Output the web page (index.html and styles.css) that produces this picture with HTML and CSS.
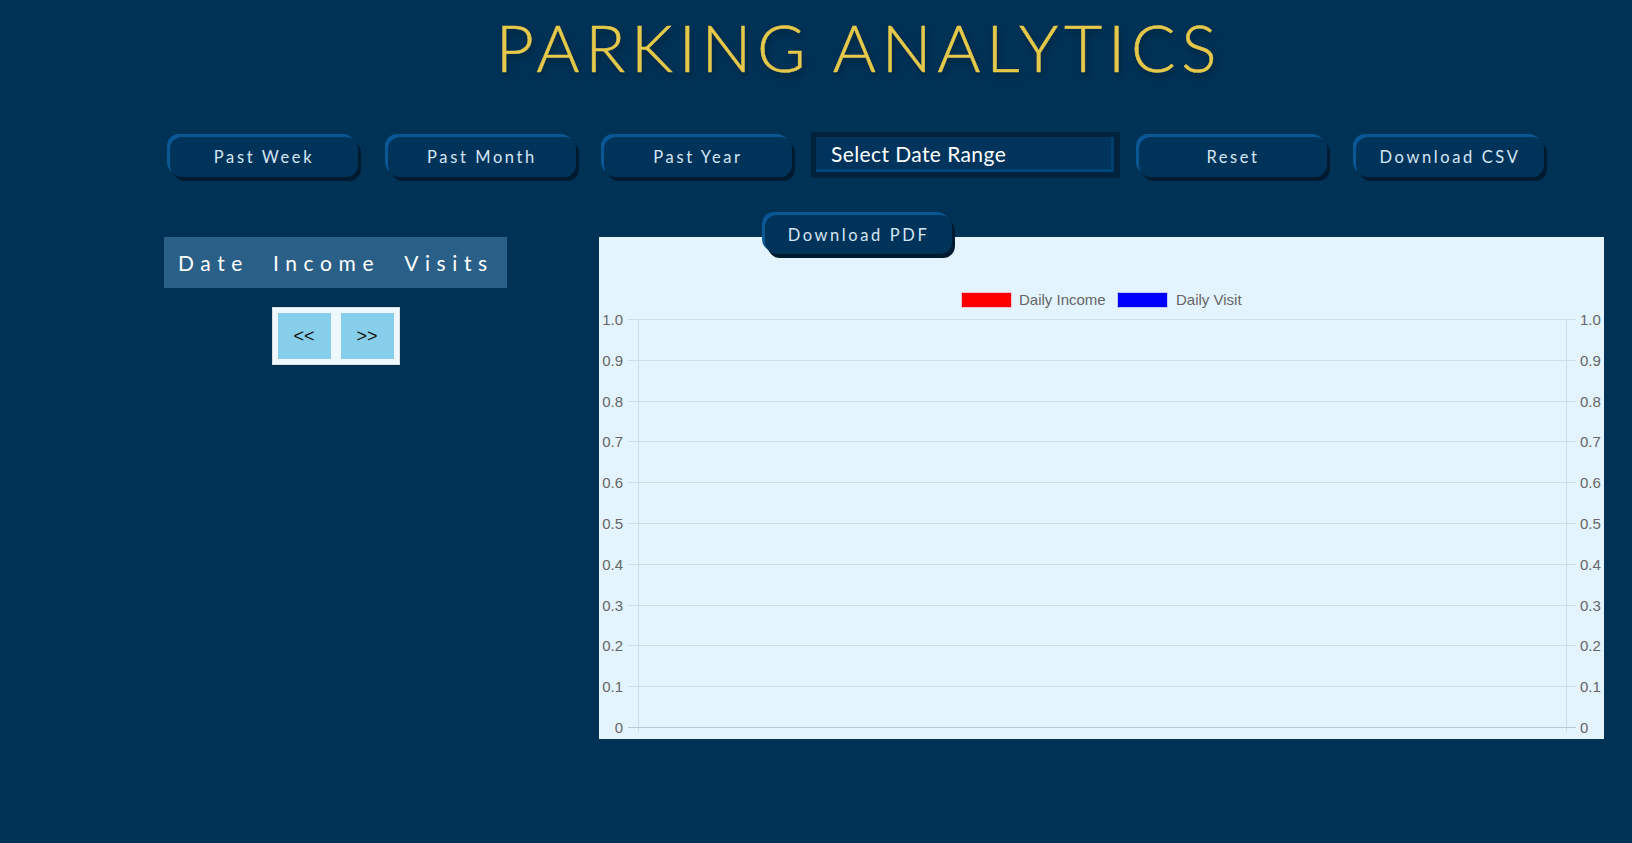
FILE: index.html
```html
<!DOCTYPE html>
<html lang="en">
<head>
<meta charset="utf-8">
<title>Parking Analytics</title>
<link rel="stylesheet" href="styles.css">
</head>
<body>
<div class="page">
  <h1 class="title">PARKING ANALYTICS</h1>
  <div class="toolbar">
    <button class="btn">Past Week</button>
    <button class="btn gap30">Past Month</button>
    <button class="btn gap28">Past Year</button>
    <div class="range"><span class="range-field">Select Date Range</span></div>
    <button class="btn gap19">Reset</button>
    <button class="btn gap29">Download CSV</button>
  </div>
  <div class="main">
    <div class="left">
      <div class="thead"><span>Date</span><span>Income</span><span>Visits</span></div>
      <div class="pager">
        <button class="pg">&lt;&lt;</button>
        <button class="pg">&gt;&gt;</button>
      </div>
    </div>
    <div class="right">
      <button class="btn pdf">Download PDF</button>
      <div class="chart">
        <svg width="1005" height="502" viewBox="0 0 1005 502" xmlns="http://www.w3.org/2000/svg">
          <g font-family="Liberation Sans, Arial, sans-serif" font-size="15" fill="#666">
            <rect x="362.5" y="55.5" width="50" height="15" fill="#ff0000" stroke="#f4c4d0" stroke-width="1"/>
            <text x="420" y="68">Daily Income</text>
            <rect x="518.5" y="55.5" width="50" height="15" fill="#0000ff" stroke="#c4c8f4" stroke-width="1"/>
            <text x="577" y="68">Daily Visit</text>
          </g>
          <g stroke="#cfdde6" stroke-width="1">
            <line x1="29" y1="82.5" x2="977" y2="82.5"/>
            <line x1="29" y1="123.5" x2="977" y2="123.5"/>
            <line x1="29" y1="164.5" x2="977" y2="164.5"/>
            <line x1="29" y1="204.5" x2="977" y2="204.5"/>
            <line x1="29" y1="245.5" x2="977" y2="245.5"/>
            <line x1="29" y1="286.5" x2="977" y2="286.5"/>
            <line x1="29" y1="327.5" x2="977" y2="327.5"/>
            <line x1="29" y1="368.5" x2="977" y2="368.5"/>
            <line x1="29" y1="408.5" x2="977" y2="408.5"/>
            <line x1="29" y1="449.5" x2="977" y2="449.5"/>
            <line x1="39.5" y1="82" x2="39.5" y2="495"/>
            <line x1="967.5" y1="82" x2="967.5" y2="495"/>
          </g>
          <line x1="29" y1="490.5" x2="977" y2="490.5" stroke="#b9c8d2" stroke-width="1"/>
          <g font-family="Liberation Sans, Arial, sans-serif" font-size="15" fill="#666" text-anchor="end">
            <text x="24" y="88">1.0</text>
            <text x="24" y="129">0.9</text>
            <text x="24" y="170">0.8</text>
            <text x="24" y="210">0.7</text>
            <text x="24" y="251">0.6</text>
            <text x="24" y="292">0.5</text>
            <text x="24" y="333">0.4</text>
            <text x="24" y="374">0.3</text>
            <text x="24" y="414">0.2</text>
            <text x="24" y="455">0.1</text>
            <text x="24" y="496">0</text>
          </g>
          <g font-family="Liberation Sans, Arial, sans-serif" font-size="15" fill="#666">
            <text x="981" y="88">1.0</text>
            <text x="981" y="129">0.9</text>
            <text x="981" y="170">0.8</text>
            <text x="981" y="210">0.7</text>
            <text x="981" y="251">0.6</text>
            <text x="981" y="292">0.5</text>
            <text x="981" y="333">0.4</text>
            <text x="981" y="374">0.3</text>
            <text x="981" y="414">0.2</text>
            <text x="981" y="455">0.1</text>
            <text x="981" y="496">0</text>
          </g>
        </svg>
      </div>
    </div>
  </div>
</div>
</body>
</html>
```

FILE: styles.css
```css
html, body {
  margin: 0;
  padding: 0;
  background: #003256;
  height: 100%;
}
body {
  font-family: "Lato", "Open Sans", sans-serif;
  color: #fff;
  overflow: hidden;
}
.page {
  width: 1632px;
}
.title {
  margin: 5px 0 0 86px;
  height: 83px;
  font-family: "Lato", sans-serif;
  font-weight: 300;
  font-size: 66px;
  line-height: 83px;
  letter-spacing: 5.7px;
  text-align: center;
  color: #e6c94a;
  text-shadow: 2px 4px 6px rgba(0, 0, 0, 0.35);
  -webkit-text-stroke: 0.5px #e6c94a;
}
.toolbar {
  display: flex;
  align-items: flex-start;
  margin-top: 44px;
  padding-left: 170px;
  height: 46px;
}
.btn {
  box-sizing: border-box;
  width: 188px;
  height: 40px;
  margin-top: 5px;
  border: none;
  border-radius: 12px;
  background: #00335a;
  color: #d6e6f5;
  font-family: "Lato", sans-serif;
  font-size: 16.5px;
  letter-spacing: 2.6px;
  padding: 0;
  box-shadow: -3px -3px 0 0 #0a5796, 3px 4px 0 0 #001a2f;
  cursor: pointer;
}
.gap30 { margin-left: 30px; }
.gap29 { margin-left: 29px; }
.gap28 { margin-left: 28px; }
.gap19 { margin-left: 19px; }
.range {
  box-sizing: border-box;
  margin-left: 19px;
  width: 309px;
  height: 46px;
  background: #00223d;
  padding: 5px 6px 6px 5px;
  border-radius: 2px;
}
.range-field {
  display: block;
  box-sizing: border-box;
  height: 35px;
  background: #00345c;
  border-bottom: 3px solid #004678;
  border-right: 3px solid #00406e;
  padding-left: 15px;
  font-family: "Lato", sans-serif;
  font-size: 21px;
  letter-spacing: 0.4px;
  line-height: 33px;
  color: #ffffff;
}
.main {
  display: flex;
  align-items: flex-start;
  margin-top: 37px;
  padding-left: 164px;
}
.left {
  display: flex;
  flex-direction: column;
  align-items: center;
  width: 343px;
  margin-top: 22px;
}
.thead {
  box-sizing: border-box;
  width: 343px;
  height: 51px;
  background: #2a5f88;
  display: flex;
  align-items: center;
  padding-left: 14px;
  gap: 24px;
  font-family: "Lato", sans-serif;
  font-size: 21px;
  letter-spacing: 6.6px;
  color: #ffffff;
}
.pager {
  margin-top: 19px;
  display: flex;
  gap: 10px;
  padding: 5px;
  background: #f0f8ff;
  border: 1px solid #d6dde3;
}
.pg {
  width: 53px;
  height: 46px;
  border: none;
  padding: 0;
  background: #87ceeb;
  color: #111;
  font-family: "Liberation Sans", Arial, sans-serif;
  font-size: 18px;
  cursor: pointer;
}
.right {
  display: flex;
  flex-direction: column;
  margin-left: 92px;
}
.pdf {
  position: relative;
  z-index: 1;
  width: 187px;
  margin: 0 0 -17px 166px;
  height: 39px;
}
.chart {
  width: 1005px;
  height: 502px;
  background: #e3f4fe;
}
.chart svg {
  display: block;
}
```
